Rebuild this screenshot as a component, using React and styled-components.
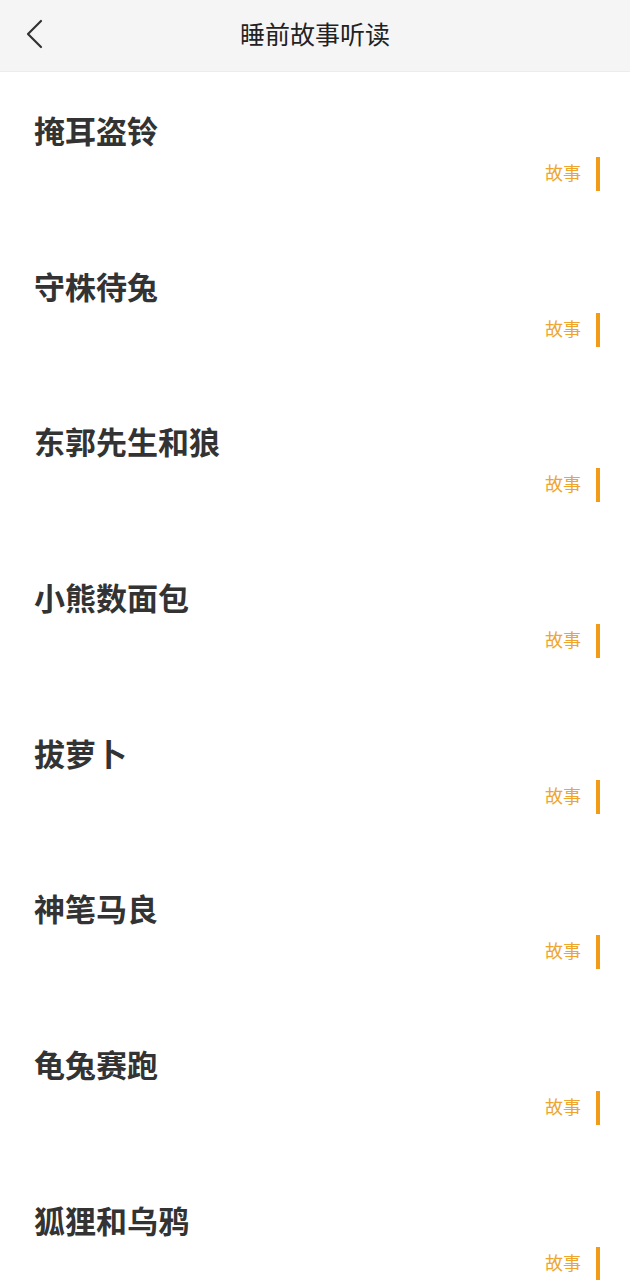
import React from "react";
import styled, { createGlobalStyle } from "styled-components";

const Global = createGlobalStyle`
  html, body { margin: 0; padding: 0; background: #fff; }
  body { font-family: "Noto Sans CJK SC", "Noto Sans", sans-serif; }
`;

const Page = styled.div`
  width: 630px;
  height: 1280px;
  overflow: hidden;
  background: #fff;
`;

const Header = styled.header`
  height: 72px;
  background: #f5f5f5;
  border-bottom: 1px solid #ececec;
  box-sizing: border-box;
  display: grid;
  grid-template-columns: 72px 1fr 72px;
  align-items: center;
`;

const BackButton = styled.button`
  border: none;
  background: none;
  padding: 0 0 4px 24px;
  height: 72px;
  display: flex;
  align-items: center;
  cursor: pointer;
`;

const Title = styled.h1`
  margin: 0;
  text-align: center;
  font-size: 25px;
  font-weight: 400;
  color: #222;
  line-height: 66px;
  padding-bottom: 6px;
`;

const List = styled.ul`
  list-style: none;
  margin: 0;
  padding: 0;
`;

const Item = styled.li`
  height: 155.7px;
  box-sizing: border-box;
  padding: 39px 30px 0 34px;
`;

const StoryName = styled.div`
  font-size: 31px;
  font-weight: 700;
  color: #333;
  line-height: 38px;
`;

const TagRow = styled.div`
  display: flex;
  justify-content: flex-end;
  align-items: center;
  gap: 15px;
  margin-top: 8px;
  height: 34px;
`;

const Tag = styled.span`
  font-size: 18px;
  color: #eea52e;
  line-height: 1;
  margin-bottom: 4px;
`;

const Bar = styled.span`
  width: 4px;
  height: 34px;
  background: #f29b16;
`;

const stories = [
  "掩耳盗铃",
  "守株待兔",
  "东郭先生和狼",
  "小熊数面包",
  "拔萝卜",
  "神笔马良",
  "龟兔赛跑",
  "狐狸和乌鸦",
];

export default function App() {
  return (
    <Page>
      <Global />
      <Header>
        <BackButton aria-label="back">
          <svg width="20" height="32" viewBox="0 0 20 32" fill="none">
            <path d="M17 3 L4 16 L17 29" stroke="#333" strokeWidth="2.2" strokeLinecap="round" strokeLinejoin="round" />
          </svg>
        </BackButton>
        <Title>睡前故事听读</Title>
        <div />
      </Header>
      <List>
        {stories.map((s) => (
          <Item key={s}>
            <StoryName>{s}</StoryName>
            <TagRow>
              <Tag>故事</Tag>
              <Bar />
            </TagRow>
          </Item>
        ))}
      </List>
    </Page>
  );
}
